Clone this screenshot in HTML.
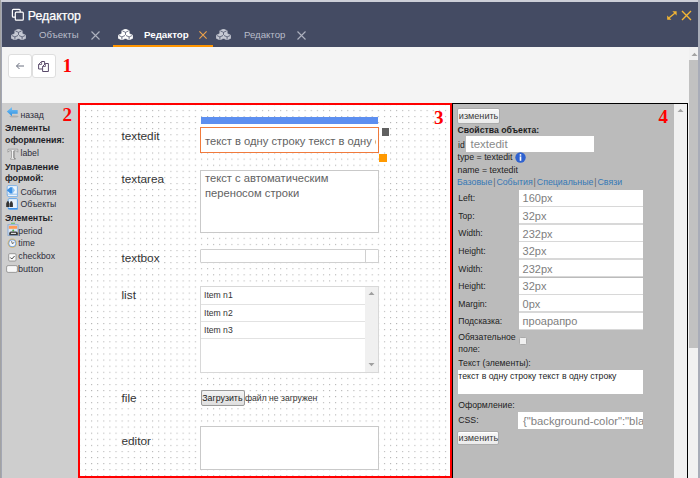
<!DOCTYPE html>
<html><head><meta charset="utf-8"><style>
html,body{margin:0;padding:0;width:700px;height:478px;overflow:hidden;background:#f4f4f4}
body{position:relative;font-family:"Liberation Sans",sans-serif}
body>div,body>svg,div>div{position:absolute}
.t{white-space:pre;line-height:1;}
</style></head><body>
<div style="left:0px;top:0px;width:700px;height:478px;background:#f4f4f4"></div>
<div style="left:0px;top:0px;width:700px;height:47px;background:#444b63"></div>
<div style="left:0px;top:0px;width:700px;height:2px;background:#cdcfd8"></div>
<div style="left:0px;top:0px;width:1px;height:478px;background:#a2a2a2"></div>
<div style="left:1px;top:2px;width:1px;height:476px;background:#a3a7b4"></div>
<div style="left:698px;top:0px;width:2px;height:478px;background:#a8acb8"></div>
<svg style="left:11px;top:8px" width="14" height="14" viewBox="0 0 14 14"><rect x="1.4" y="1.4" width="7.8" height="7.8" rx="1" fill="none" stroke="#fff" stroke-width="1.2"/><rect x="4.3" y="4.2" width="8" height="8" rx="1" fill="#444b63" stroke="#fff" stroke-width="1.2"/></svg>
<div class="t" style="left:27.80px;top:9.75px;font-size:12.35px;color:#ffffff;-webkit-text-stroke:0.25px #fff">Редактор</div>
<svg style="left:666.5px;top:10.5px" width="10" height="9" viewBox="0 0 10 9"><path d="M2.2 6.8L7.8 2.2" stroke="#f2b534" stroke-width="1.3"/><path d="M0.2 4.6v4.2h4.2z" fill="#f2b534"/><path d="M9.6 0.2v4.2L5.4 0.2z" fill="#f2b534"/></svg>
<svg style="left:681px;top:10px" width="11" height="11" viewBox="0 0 11 11"><path d="M1 1L10 10M10 1L1 10" stroke="#f2b534" stroke-width="1.4"/></svg>
<svg style="left:10.5px;top:29px" width="15" height="11.2" viewBox="0 0 15 11.2"><path d="M7.50 0.00L11.20 1.73V4.67L7.50 6.40L3.80 4.67V1.73ZM3.90 4.60L7.60 6.33V9.27L3.90 11.00L0.20 9.27V6.33ZM11.10 4.60L14.80 6.33V9.27L11.10 11.00L7.40 9.27V6.33Z" fill="#c6c9d4" stroke="#c6c9d4" stroke-width="0.6" stroke-linejoin="round"/><path d="M4.40 1.92L7.50 3.33L10.60 1.92M7.50 3.33V5.90M0.80 6.52L3.90 7.93L7.00 6.52M3.90 7.93V10.50M8.00 6.52L11.10 7.93L14.20 6.52M11.10 7.93V10.50" fill="none" stroke="#444b63" stroke-width="0.75"/></svg>
<div class="t" style="left:39.00px;top:30.27px;font-size:9.6px;color:#b9bdca;">Объекты</div>
<svg style="left:91px;top:31px" width="9" height="9" viewBox="0 0 9 9"><path d="M0.5 0.5L8.5 8.5M8.5 0.5L0.5 8.5" stroke="#aeb2bf" stroke-width="1.1"/></svg>
<svg style="left:118.2px;top:29px" width="15" height="11.2" viewBox="0 0 15 11.2"><path d="M7.50 0.00L11.20 1.73V4.67L7.50 6.40L3.80 4.67V1.73ZM3.90 4.60L7.60 6.33V9.27L3.90 11.00L0.20 9.27V6.33ZM11.10 4.60L14.80 6.33V9.27L11.10 11.00L7.40 9.27V6.33Z" fill="#ffffff" stroke="#ffffff" stroke-width="0.6" stroke-linejoin="round"/><path d="M4.40 1.92L7.50 3.33L10.60 1.92M7.50 3.33V5.90M0.80 6.52L3.90 7.93L7.00 6.52M3.90 7.93V10.50M8.00 6.52L11.10 7.93L14.20 6.52M11.10 7.93V10.50" fill="none" stroke="#444b63" stroke-width="0.75"/></svg>
<div class="t" style="left:144.00px;top:29.95px;font-size:9.75px;color:#ffffff;font-weight:700;">Редактор</div>
<svg style="left:199px;top:31px" width="8" height="8" viewBox="0 0 8 8"><path d="M0.4 0.4L7.6 7.6M7.6 0.4L0.4 7.6" stroke="#eda24a" stroke-width="1.1"/></svg>
<div style="left:113px;top:45px;width:100px;height:2px;background:#ff9500"></div>
<svg style="left:216.2px;top:29px" width="15" height="11.2" viewBox="0 0 15 11.2"><path d="M7.50 0.00L11.20 1.73V4.67L7.50 6.40L3.80 4.67V1.73ZM3.90 4.60L7.60 6.33V9.27L3.90 11.00L0.20 9.27V6.33ZM11.10 4.60L14.80 6.33V9.27L11.10 11.00L7.40 9.27V6.33Z" fill="#c6c9d4" stroke="#c6c9d4" stroke-width="0.6" stroke-linejoin="round"/><path d="M4.40 1.92L7.50 3.33L10.60 1.92M7.50 3.33V5.90M0.80 6.52L3.90 7.93L7.00 6.52M3.90 7.93V10.50M8.00 6.52L11.10 7.93L14.20 6.52M11.10 7.93V10.50" fill="none" stroke="#444b63" stroke-width="0.75"/></svg>
<div class="t" style="left:244.00px;top:30.27px;font-size:9.6px;color:#b9bdca;">Редактор</div>
<svg style="left:296.5px;top:31px" width="9" height="9" viewBox="0 0 9 9"><path d="M0.5 0.5L8.5 8.5M8.5 0.5L0.5 8.5" stroke="#aeb2bf" stroke-width="1.1"/></svg>
<div style="left:8px;top:54px;width:23.5px;height:24px;background:#fff;border:1px solid #dedede;border-radius:3px;box-sizing:border-box"></div>
<div style="left:32px;top:54px;width:23.5px;height:24px;background:#fff;border:1px solid #dedede;border-radius:3px;box-sizing:border-box"></div>
<svg style="left:15px;top:61px" width="10" height="10" viewBox="0 0 10 10"><path d="M9 5H1.5M4.5 2L1.5 5l3 3" fill="none" stroke="#6b7080" stroke-width="1"/></svg>
<svg style="left:34px;top:57px" width="20" height="18" viewBox="0 0 20 18"><path d="M4.6 7.5L7.6 4.5H10.6V12H4.6Z" fill="#fff" stroke="#5a4a6a" stroke-width="1"/><path d="M7.6 4.5V7.5H4.6" fill="none" stroke="#5a4a6a" stroke-width="0.8"/><path d="M8.6 9.5L11.4 6.5H14.4V14.5H8.6Z" fill="#fff" stroke="#5a4a6a" stroke-width="1"/><path d="M11.4 6.5V9.5H8.6" fill="none" stroke="#5a4a6a" stroke-width="0.8"/></svg>
<div class="t" style="left:62.50px;top:56.42px;font-size:19px;color:#ff0000;font-weight:700;font-family:'Liberation Serif',serif">1</div>
<div style="left:2px;top:103px;width:75.6px;height:375px;background:#cecece"></div>
<div style="left:78px;top:103px;width:374px;height:375px;background:#fff;border:2px solid #ff0000;box-sizing:border-box"></div>
<svg style="left:80px;top:105px" width="370" height="371"><defs><pattern id="dots" x="-1.1" y="-1.2" width="6.1" height="6.09" patternUnits="userSpaceOnUse"><rect x="0" y="0" width="1.05" height="1.05" fill="#b0b0b0"/></pattern></defs><rect width="370" height="371" fill="url(#dots)"/></svg>
<div class="t" style="left:434.00px;top:108.02px;font-size:19px;color:#ff0000;font-weight:700;font-family:'Liberation Serif',serif">3</div>
<div class="t" style="left:121.50px;top:131.41px;font-size:11.8px;color:#333;">textedit</div>
<div class="t" style="left:121.50px;top:173.61px;font-size:11.8px;color:#333;">textarea</div>
<div class="t" style="left:121.50px;top:252.71px;font-size:11.8px;color:#333;">textbox</div>
<div class="t" style="left:121.50px;top:289.51px;font-size:11.8px;color:#333;">list</div>
<div class="t" style="left:121.50px;top:393.21px;font-size:11.8px;color:#333;">file</div>
<div class="t" style="left:121.50px;top:435.71px;font-size:11.8px;color:#333;">editor</div>
<div style="left:201px;top:117px;width:177px;height:7px;background:#5d8ff0"></div>
<div style="left:200px;top:127px;width:179px;height:26px;background:#fff;border:1.5px solid #f07a3c;box-sizing:border-box;overflow:hidden"></div>
<div style="left:201.5px;top:128.5px;width:174.5px;height:23px;overflow:hidden"><div class="t" style="left:3.5px;top:7.02px;font-size:11.2px;color:#626262">текст в одну строку текст в одну строку</div></div>
<div style="left:382px;top:128px;width:7px;height:8px;background:#606060"></div>
<div style="left:379px;top:154px;width:8px;height:8px;background:#ff9900"></div>
<div style="left:200px;top:170px;width:179px;height:62.5px;background:#fff;border:1px solid #c9c9c9;box-sizing:border-box"></div>
<div class="t" style="left:205.00px;top:173.42px;font-size:11.2px;color:#626262;">текст с автоматическим</div>
<div class="t" style="left:205.00px;top:187.82px;font-size:11.2px;color:#626262;">переносом строки</div>
<div style="left:200px;top:249px;width:179px;height:14px;background:#fff;border:1px solid #d0d0d0;border-radius:1px;box-sizing:border-box"></div>
<div style="left:365px;top:249px;width:1px;height:14px;background:#d0d0d0"></div>
<div style="left:200px;top:286px;width:179px;height:86.5px;background:#fff;border:1px solid #d8d8d8;box-sizing:border-box"></div>
<div style="left:365px;top:287px;width:13px;height:84.5px;background:#f0f0f0"></div>
<div style="left:201px;top:303.5px;width:164px;height:1px;background:#e2e2e2"></div>
<div style="left:201px;top:321px;width:164px;height:1px;background:#e2e2e2"></div>
<div style="left:201px;top:338px;width:164px;height:1px;background:#e2e2e2"></div>
<svg style="left:368px;top:291px" width="7" height="4" viewBox="0 0 7 4"><path d="M0.5 4L3.5 0.8 6.5 4z" fill="#a0a0a0"/></svg>
<svg style="left:368px;top:363px" width="7" height="4" viewBox="0 0 7 4"><path d="M0.5 0L3.5 3.2 6.5 0z" fill="#a0a0a0"/></svg>
<div class="t" style="left:204.00px;top:291.32px;font-size:8.6px;color:#333;">Item n1</div>
<div class="t" style="left:204.00px;top:308.72px;font-size:8.6px;color:#333;">Item n2</div>
<div class="t" style="left:204.00px;top:325.92px;font-size:8.6px;color:#333;">Item n3</div>
<div style="left:201px;top:390px;width:43.5px;height:15.5px;background:linear-gradient(#f4f4f4,#dedede);border:1px solid #9a9a9a;border-radius:2px;box-sizing:border-box"></div>
<div class="t" style="left:202.30px;top:394.25px;font-size:8.8px;color:#222;">Загрузить</div>
<div class="t" style="left:245.00px;top:394.42px;font-size:8.6px;color:#333;">файл не загружен</div>
<div style="left:200px;top:426px;width:179px;height:43.5px;background:#fff;border:1px solid #c9c9c9;box-sizing:border-box"></div>
<svg style="left:6px;top:106px" width="13" height="12" viewBox="0 0 13 12"><defs><linearGradient id="ga" x1="0" y1="0" x2="0" y2="1"><stop offset="0" stop-color="#7cc4f6"/><stop offset="1" stop-color="#2a8ee0"/></linearGradient></defs><ellipse cx="8" cy="10.6" rx="4.5" ry="1" fill="#b0b0b0"/><path d="M0.8 5.5L6 1V4H11.7V7.7H6V10.3Z" fill="url(#ga)"/></svg>
<div class="t" style="left:20.50px;top:111.24px;font-size:8.7px;color:#2d2d3a;">назад</div>
<div class="t" style="left:5.00px;top:124.31px;font-size:8.85px;color:#1e1e28;font-weight:700;">Элементы</div>
<div class="t" style="left:5.00px;top:135.61px;font-size:8.85px;color:#1e1e28;font-weight:700;">оформления:</div>
<svg style="left:6.5px;top:147.5px" width="12" height="12" viewBox="0 0 12 12"><path d="M1 1.2H10.8V4.2L10.1 3.4Q9.6 2.7 8.6 2.7H6.9V9.6Q6.9 10.3 8.2 10.5V11.2H3.6V10.5Q4.6 10.3 4.6 9.6V2.7H3Q2 2.7 1.6 3.4L1 4.2Z" fill="#fafafa" stroke="#8a8a8a" stroke-width="0.75" stroke-linejoin="round"/><path d="M6.9 3V9.6Q6.9 10.3 8.2 10.5V11.2" fill="none" stroke="#666" stroke-width="0.6"/></svg>
<div class="t" style="left:20.50px;top:149.14px;font-size:8.7px;color:#2d2d3a;">label</div>
<div class="t" style="left:5.00px;top:162.50px;font-size:9.1px;color:#1e1e28;font-weight:700;">Управление</div>
<div class="t" style="left:5.00px;top:174.01px;font-size:8.85px;color:#1e1e28;font-weight:700;">формой:</div>
<svg style="left:6px;top:185px" width="12" height="13" viewBox="0 0 12 13"><path d="M2 0.6H10.4Q11.4 0.6 11.4 1.6V11.6H3Q1.2 11.6 1.2 10V1.4Z" fill="#eef5fc" stroke="#78aee6" stroke-width="0.9"/><path d="M1.2 10Q2 8.6 3.6 9.2H11" fill="none" stroke="#78aee6" stroke-width="0.8"/><path d="M0.8 5.3L4.2 2.2H6.6V8.4H4.2Z" fill="#3c90e4"/><path d="M6.6 2.2L9 5.3L6.6 8.4Z" fill="#8cc4f4"/></svg>
<div class="t" style="left:20.50px;top:187.54px;font-size:8.7px;color:#2d2d3a;">События</div>
<svg style="left:6px;top:198px" width="12" height="13" viewBox="0 0 12 13"><path d="M3 0.6H10.6Q11.4 0.6 11.4 1.6V11.4H3.6Q2.2 11.4 2.2 10V1.4Z" fill="#e6f1fc" stroke="#5aa2ea" stroke-width="0.9"/><path d="M2.2 10.6H11.4" stroke="#3a90e8" stroke-width="1.2"/><path d="M0.2 9V5.6L1.2 3.2H2.6L3.4 5.6V9ZM3.8 9V5.6L4.6 3.2H6L6.9 5.6V9Z" fill="#333"/></svg>
<div class="t" style="left:20.50px;top:200.44px;font-size:8.7px;color:#2d2d3a;">Объекты</div>
<div class="t" style="left:5.00px;top:213.51px;font-size:8.85px;color:#1e1e28;font-weight:700;">Элементы:</div>
<svg style="left:6.5px;top:222px" width="12" height="14" viewBox="0 0 12 14"><path d="M4 1.3H8" stroke="#6cc070" stroke-width="1.2"/><rect x="1" y="2.8" width="10" height="10.5" fill="#dce8f6" stroke="#7fa6d8" stroke-width="0.9"/><rect x="1.8" y="3.8" width="8.4" height="3" fill="#ff9a55"/><circle cx="6.2" cy="8.4" r="1" fill="#4cae4c"/><path d="M2.2 13.3V11.3Q2.2 9.6 4 9.6H9Q10.8 9.6 10.8 11.3V13.3Z" fill="#3a3a3a"/><rect x="4" y="10.8" width="5" height="1.2" fill="#ddd"/></svg>
<div class="t" style="left:18.30px;top:226.84px;font-size:8.7px;color:#2d2d3a;">period</div>
<svg style="left:6.5px;top:238px" width="11" height="11" viewBox="0 0 11 11"><circle cx="5.3" cy="5.3" r="4.7" fill="#d9b870"/><circle cx="5.3" cy="5.3" r="3.8" fill="#6c9ee0"/><circle cx="5.3" cy="5.3" r="3" fill="#f2f7fd"/><path d="M4.6 3.2L5.3 5.6L7.3 4.4" fill="none" stroke="#444" stroke-width="0.8"/></svg>
<div class="t" style="left:18.30px;top:239.34px;font-size:8.7px;color:#2d2d3a;">time</div>
<svg style="left:8px;top:252.5px" width="9" height="9" viewBox="0 0 9 9"><rect x="0.7" y="0.7" width="7.3" height="7.3" rx="1" fill="#fafafa" stroke="#888" stroke-width="0.8"/><path d="M2.3 4.5l1.5 1.5 2.8-3" fill="none" stroke="#333" stroke-width="0.9"/></svg>
<div class="t" style="left:18.30px;top:252.24px;font-size:8.7px;color:#2d2d3a;">checkbox</div>
<svg style="left:6px;top:265px" width="12" height="8" viewBox="0 0 12 8"><rect x="0.6" y="0.6" width="10.8" height="6.8" rx="1.5" fill="#f8f8f8" stroke="#888" stroke-width="0.8"/></svg>
<div class="t" style="left:18.00px;top:264.60px;font-size:9.1px;color:#2d2d3a;">button</div>
<div class="t" style="left:62.50px;top:105.12px;font-size:19px;color:#ff0000;font-weight:700;font-family:'Liberation Serif',serif">2</div>
<div style="left:452px;top:103px;width:236px;height:375px;background:#bbbbbb;border:1px solid #000;border-bottom:none;box-sizing:border-box"></div>
<div style="left:674px;top:104px;width:13px;height:374px;background:#f0f0f0"></div>
<svg style="left:677px;top:108px" width="7" height="4" viewBox="0 0 7 4"><path d="M0.5 4L3.5 0.8 6.5 4z" fill="#a3a3a3"/></svg>
<div class="t" style="left:658.50px;top:106.92px;font-size:19px;color:#ff0000;font-weight:700;font-family:'Liberation Serif',serif">4</div>
<div style="left:457px;top:108px;width:42.5px;height:15.5px;background:linear-gradient(#f7f7f7,#ebebeb);border:1px solid #acacac;border-radius:2px;box-sizing:border-box;box-shadow:inset 0 1px 0 #fff"></div>
<div class="t" style="left:458.80px;top:111.90px;font-size:9.1px;color:#3a3a3a;">изменить</div>
<div class="t" style="left:457.50px;top:126.04px;font-size:8.7px;color:#1e1e1e;font-weight:700;">Свойства объекта:</div>
<div class="t" style="left:458.00px;top:141.44px;font-size:8.7px;color:#222;">id</div>
<div style="left:465.8px;top:136px;width:128.5px;height:16px;background:#fff"></div>
<div class="t" style="left:470.50px;top:139.07px;font-size:11.5px;color:#8a8a8a;">textedit</div>
<div class="t" style="left:457.50px;top:153.25px;font-size:8.8px;color:#222;">type = textedit</div>
<svg style="left:515px;top:152px" width="11" height="11" viewBox="0 0 11 11"><circle cx="5.5" cy="5.5" r="5.2" fill="#2f62d0"/><circle cx="5.5" cy="2.9" r="0.9" fill="#fff"/><rect x="4.7" y="4.4" width="1.6" height="4.4" fill="#fff"/></svg>
<div class="t" style="left:457.50px;top:166.25px;font-size:8.8px;color:#222;">name = textedit</div>
<div class="t" style="left:457.00px;top:178.35px;font-size:8.8px;color:#3578b6;">Базовые<span style="color:#666;margin:0 0.9px">|</span>События<span style="color:#666;margin:0 0.9px">|</span>Специальные<span style="color:#666;margin:0 0.9px">|</span>Связи</div>
<div style="left:518.5px;top:189.8px;width:124.5px;height:16px;background:#fff"></div>
<div style="left:518.5px;top:205.8px;width:124.5px;height:1.4px;background:#d8d8d8"></div>
<div class="t" style="left:458.30px;top:194.32px;font-size:8.6px;color:#222;">Left:</div>
<div class="t" style="left:522.60px;top:193.49px;font-size:11px;color:#7e7e7e;">160px</div>
<div style="left:518.5px;top:207.36px;width:124.5px;height:16px;background:#fff"></div>
<div style="left:518.5px;top:223.36px;width:124.5px;height:1.4px;background:#d8d8d8"></div>
<div class="t" style="left:458.30px;top:211.88px;font-size:8.6px;color:#222;">Top:</div>
<div class="t" style="left:522.60px;top:211.05px;font-size:11px;color:#7e7e7e;">32px</div>
<div style="left:518.5px;top:224.92000000000002px;width:124.5px;height:16px;background:#fff"></div>
<div style="left:518.5px;top:240.92000000000002px;width:124.5px;height:1.4px;background:#d8d8d8"></div>
<div class="t" style="left:458.30px;top:229.44px;font-size:8.6px;color:#222;">Width:</div>
<div class="t" style="left:522.60px;top:228.61px;font-size:11px;color:#7e7e7e;">232px</div>
<div style="left:518.5px;top:242.48000000000002px;width:124.5px;height:16px;background:#fff"></div>
<div style="left:518.5px;top:258.48px;width:124.5px;height:1.4px;background:#d8d8d8"></div>
<div class="t" style="left:458.30px;top:247.00px;font-size:8.6px;color:#222;">Height:</div>
<div class="t" style="left:522.60px;top:246.17px;font-size:11px;color:#7e7e7e;">32px</div>
<div style="left:518.5px;top:260.04px;width:124.5px;height:16px;background:#fff"></div>
<div style="left:518.5px;top:276.04px;width:124.5px;height:1.4px;background:#d8d8d8"></div>
<div class="t" style="left:458.30px;top:264.56px;font-size:8.6px;color:#222;">Width:</div>
<div class="t" style="left:522.60px;top:263.73px;font-size:11px;color:#7e7e7e;">232px</div>
<div style="left:518.5px;top:277.6px;width:124.5px;height:16px;background:#fff"></div>
<div style="left:518.5px;top:293.6px;width:124.5px;height:1.4px;background:#d8d8d8"></div>
<div class="t" style="left:458.30px;top:282.12px;font-size:8.6px;color:#222;">Height:</div>
<div class="t" style="left:522.60px;top:281.29px;font-size:11px;color:#7e7e7e;">32px</div>
<div style="left:518.5px;top:295.15999999999997px;width:124.5px;height:16px;background:#fff"></div>
<div style="left:518.5px;top:311.15999999999997px;width:124.5px;height:1.4px;background:#d8d8d8"></div>
<div class="t" style="left:458.30px;top:299.68px;font-size:8.6px;color:#222;">Margin:</div>
<div class="t" style="left:522.60px;top:298.85px;font-size:11px;color:#7e7e7e;">0px</div>
<div style="left:518.5px;top:312.72px;width:124.5px;height:16px;background:#fff"></div>
<div style="left:518.5px;top:328.72px;width:124.5px;height:1.4px;background:#d8d8d8"></div>
<div class="t" style="left:458.30px;top:317.24px;font-size:8.6px;color:#222;">Подсказка:</div>
<div class="t" style="left:522.60px;top:316.41px;font-size:11px;color:#7e7e7e;">проарапро</div>
<div class="t" style="left:458.30px;top:332.54px;font-size:8.7px;color:#222;">Обязательное</div>
<div class="t" style="left:458.30px;top:345.14px;font-size:8.7px;color:#222;">поле:</div>
<div style="left:519.3px;top:337px;width:8px;height:7.8px;background:#f0f0f0;border:1px solid #aaa;border-radius:1.5px;box-sizing:border-box"></div>
<div class="t" style="left:458.30px;top:358.54px;font-size:8.7px;color:#222;">Текст (элементы):</div>
<div style="left:457.7px;top:370px;width:185.3px;height:24px;background:#fff"></div>
<div class="t" style="left:458.30px;top:372.44px;font-size:8.7px;color:#222;">текст в одну строку текст в одну строку</div>
<div class="t" style="left:458.30px;top:400.54px;font-size:8.7px;color:#222;">Оформление:</div>
<div class="t" style="left:458.30px;top:415.74px;font-size:8.7px;color:#222;">CSS:</div>
<div style="left:518.3px;top:412.3px;width:124.7px;height:16.3px;background:#fff;overflow:hidden"><div class="t" style="left:4.6px;top:3.43px;font-size:11.3px;color:#828282">{"background-color":"black"}</div></div>
<div style="left:456.8px;top:430.6px;width:42.6px;height:14px;background:linear-gradient(#f7f7f7,#ebebeb);border:1px solid #acacac;border-radius:2px;box-sizing:border-box;box-shadow:inset 0 1px 0 #fff"></div>
<div class="t" style="left:458.60px;top:433.90px;font-size:9.1px;color:#3a3a3a;">изменить</div>
<div style="left:689px;top:47px;width:9px;height:431px;background:#f1f1f1"></div>
<div style="left:689px;top:60px;width:9px;height:287.6px;background:#c1c1c1"></div>
<svg style="left:691px;top:52px" width="7" height="4" viewBox="0 0 7 4"><path d="M0.5 4L3.5 0.8 6.5 4z" fill="#a3a3a3"/></svg>
</body></html>
